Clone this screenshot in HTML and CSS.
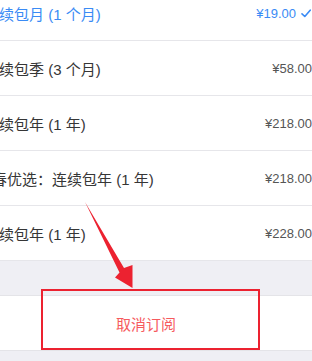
FILE: index.html
```html
<!DOCTYPE html>
<html lang="zh">
<head>
<meta charset="utf-8">
<link rel="stylesheet" href="styles.css">
</head>
<body>
<div class="page">
  <ul class="list">
    <li class="row active"><span class="name">连续包月 (1 个月)</span><span class="price">¥19.00<svg class="check" width="10" height="9" viewBox="0 0 10 9"><path d="M1 4.8 L3.8 7.5 L9.2 1.2" fill="none" stroke="#3a8bf5" stroke-width="1.6" stroke-linecap="round" stroke-linejoin="round"/></svg></span></li>
    <li class="row"><span class="name">连续包季 (3 个月)</span><span class="price">¥58.00</span></li>
    <li class="row"><span class="name">连续包年 (1 年)</span><span class="price">¥218.00</span></li>
    <li class="row promo"><span class="name">青春优选：连续包年 (1 年)</span><span class="price">¥218.00</span></li>
    <li class="row"><span class="name">连续包年 (1 年)</span><span class="price">¥228.00</span></li>
  </ul>
  <div class="gap"></div>
  <div class="cancel">取消订阅</div>
  <div class="highlight"></div>
  <svg class="arrow" width="312" height="361" viewBox="0 0 312 361"><path d="M85 202 L124 268 L132.5 265 L132.5 288 L115 277.5 L119.5 272.5 Z" fill="#ec2230"/></svg>
</div>
</body>
</html>
```
FILE: styles.css
```css
html, body {
  margin: 0;
  padding: 0;
  background: #efeff4;
  overflow: hidden;
}
body {
  width: 312px;
  height: 361px;
  font-family: "Liberation Sans", "Noto Sans CJK SC", sans-serif;
}
.page {
  position: relative;
  width: 312px;
  height: 361px;
  overflow: hidden;
}
.list {
  list-style: none;
  margin: -14px 0 0 0;
  padding: 0;
  background: #fff;
}
.row {
  display: flex;
  align-items: center;
  justify-content: space-between;
  height: 54px;
  border-bottom: 1px solid #e6e6ea;
  margin-left: -16px;
  padding-right: 1px;
}
.row.promo {
  margin-left: -23px;
}
.name {
  font-size: 15px;
  color: #363636;
  white-space: nowrap;
}
.price {
  display: flex;
  align-items: center;
  gap: 5px;
  font-size: 13px;
  color: #555;
  white-space: nowrap;
}
.row:not(.active) .price {
  margin-right: -1px;
}
.active .name, .active .price {
  color: #3a8bf5;
}
.check {
  display: block;
}
.gap {
  height: 34px;
  border-bottom: 1px solid #e4e4e8;
}
.cancel {
  height: 54px;
  background: #fff;
  border-bottom: 1px solid #e4e4e8;
  display: flex;
  align-items: center;
  justify-content: center;
  padding-right: 20px;
  font-size: 15px;
  color: #f65a5e;
}
.highlight {
  position: absolute;
  left: 41px;
  top: 289px;
  width: 215px;
  height: 57px;
  border: 2.5px solid #ec2230;
}
.arrow {
  position: absolute;
  left: 0;
  top: 0;
  pointer-events: none;
}
```
